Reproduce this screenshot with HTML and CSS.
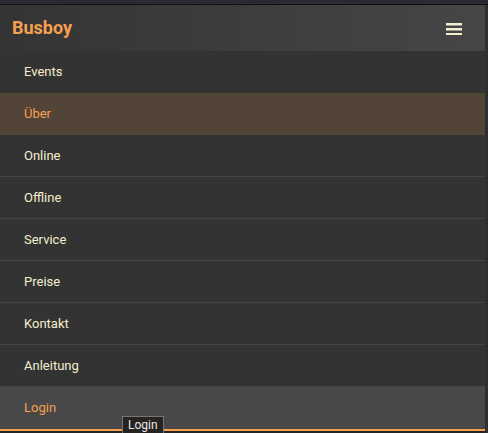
FILE: index.html
```html
<!DOCTYPE html>
<html lang="de">
<head>
<meta charset="UTF-8"/>
<link rel="stylesheet" href="styles.css">
</head>
<body>
<div id="topstrip"></div>
<div id="wrapper">
<div class="header">
<span class="brand">Busboy</span>
<svg class="burger" width="16" height="14" viewBox="0 0 16 14"><rect x="0" y="2" width="16" height="2.5" fill="#f3efcf"/><rect x="0" y="7" width="16" height="2.5" fill="#f3efcf"/><rect x="0" y="12" width="16" height="2.5" fill="#f3efcf"/></svg>
</div>
<ul class="menu">
<li class="first">Events</li>
<li class="active">Über</li>
<li>Online</li>
<li>Offline</li>
<li>Service</li>
<li>Preise</li>
<li>Kontakt</li>
<li>Anleitung</li>
<li class="login">Login</li>
</ul>
<div class="below">
<span class="tip">Login</span>
</div>
</div>
</body>
</html>
```

FILE: styles.css
```css
html, body {
	margin:0;
	padding:0;
	background:#2f2f2f;
	font-family:Roboto, "Liberation Sans", sans-serif;
	overflow:hidden;
}
#topstrip {
	height:4px;
	background:#2a2a30;
	border-bottom:1px solid #111;
}
#wrapper {
	width:485px;
}
.header {
	height:46px;
	display:flex;
	align-items:center;
	justify-content:space-between;
	padding:0 23px 0 12px;
	background:linear-gradient(to right, #343434, #464646);
}
.brand {
	color:#f7a04e;
	font-weight:bold;
	font-size:18px;
	margin-top:-2px;
}
.burger {
	display:block;
	margin-top:-1px;
}
.menu {
	list-style-type:none;
	margin:0;
	padding:0;
}
.menu li {
	height:41px;
	line-height:41px;
	padding-left:24px;
	font-size:13px;
	color:#f3efcf;
	background:#333;
	border-bottom:1px solid #444;
}
.menu li.first {
	border-bottom:none;
	height:42px;
}
.menu li.active {
	background:#524537;
	color:#f7a04e;
	border-bottom:none;
	height:42px;
}
.menu li.login {
	background:#484848;
	color:#f7a04e;
	border-bottom:none;
	height:42px;
}
.below {
	position:relative;
	height:10px;
	border-top:2px solid #f7a04e;
	background:#252525;
}
.tip {
	position:absolute;
	left:122px;
	top:-15px;
	padding:1px 5px;
	font-size:12px;
	color:#e8e8e8;
	background:#262320;
	border:1px solid #777;
}
```
